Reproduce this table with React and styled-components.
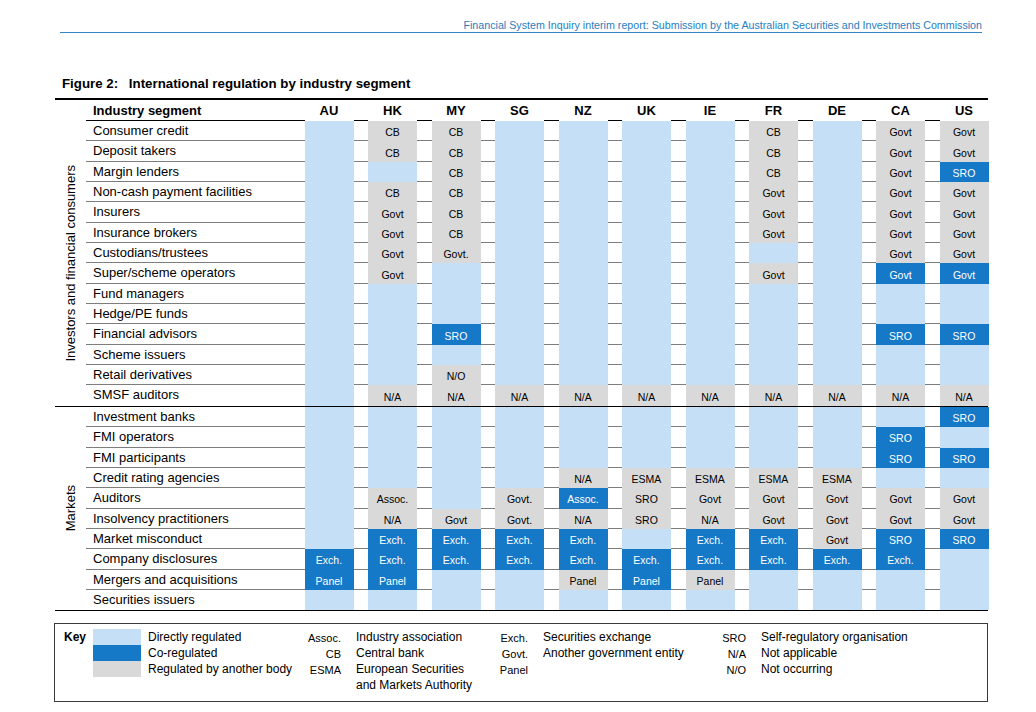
import React from 'react';
import styled, { createGlobalStyle } from 'styled-components';

const GlobalStyle = createGlobalStyle`
  body {
    margin: 0;
    background: #ffffff;
    font-family: "Liberation Sans", Arial, sans-serif;
    color: #000000;
  }
`;

const COLS = ['AU', 'HK', 'MY', 'SG', 'NZ', 'UK', 'IE', 'FR', 'DE', 'CA', 'US'];

const L = '';
const GROUPS = [
  {
    name: 'Investors and financial consumers',
    rows: [
      ['Consumer credit', [L, 'g:CB', 'g:CB', L, L, L, L, 'g:CB', L, 'g:Govt', 'g:Govt']],
      ['Deposit takers', [L, 'g:CB', 'g:CB', L, L, L, L, 'g:CB', L, 'g:Govt', 'g:Govt']],
      ['Margin lenders', [L, L, 'g:CB', L, L, L, L, 'g:CB', L, 'g:Govt', 'd:SRO']],
      ['Non-cash payment facilities', [L, 'g:CB', 'g:CB', L, L, L, L, 'g:Govt', L, 'g:Govt', 'g:Govt']],
      ['Insurers', [L, 'g:Govt', 'g:CB', L, L, L, L, 'g:Govt', L, 'g:Govt', 'g:Govt']],
      ['Insurance brokers', [L, 'g:Govt', 'g:CB', L, L, L, L, 'g:Govt', L, 'g:Govt', 'g:Govt']],
      ['Custodians/trustees', [L, 'g:Govt', 'g:Govt.', L, L, L, L, L, L, 'g:Govt', 'g:Govt']],
      ['Super/scheme operators', [L, 'g:Govt', L, L, L, L, L, 'g:Govt', L, 'd:Govt', 'd:Govt']],
      ['Fund managers', [L, L, L, L, L, L, L, L, L, L, L]],
      ['Hedge/PE funds', [L, L, L, L, L, L, L, L, L, L, L]],
      ['Financial advisors', [L, L, 'd:SRO', L, L, L, L, L, L, 'd:SRO', 'd:SRO']],
      ['Scheme issuers', [L, L, L, L, L, L, L, L, L, L, L]],
      ['Retail derivatives', [L, L, 'g:N/O', L, L, L, L, L, L, L, L]],
      ['SMSF auditors', [L, 'g:N/A', 'g:N/A', 'g:N/A', 'g:N/A', 'g:N/A', 'g:N/A', 'g:N/A', 'g:N/A', 'g:N/A', 'g:N/A']],
    ],
  },
  {
    name: 'Markets',
    rows: [
      ['Investment banks', [L, L, L, L, L, L, L, L, L, L, 'd:SRO']],
      ['FMI operators', [L, L, L, L, L, L, L, L, L, 'd:SRO', L]],
      ['FMI participants', [L, L, L, L, L, L, L, L, L, 'd:SRO', 'd:SRO']],
      ['Credit rating agencies', [L, L, L, L, 'g:N/A', 'g:ESMA', 'g:ESMA', 'g:ESMA', 'g:ESMA', L, L]],
      ['Auditors', [L, 'g:Assoc.', L, 'g:Govt.', 'd:Assoc.', 'g:SRO', 'g:Govt', 'g:Govt', 'g:Govt', 'g:Govt', 'g:Govt']],
      ['Insolvency practitioners', [L, 'g:N/A', 'g:Govt', 'g:Govt.', 'g:N/A', 'g:SRO', 'g:N/A', 'g:Govt', 'g:Govt', 'g:Govt', 'g:Govt']],
      ['Market misconduct', [L, 'd:Exch.', 'd:Exch.', 'd:Exch.', 'd:Exch.', L, 'd:Exch.', 'd:Exch.', 'g:Govt', 'd:SRO', 'd:SRO']],
      ['Company disclosures', ['d:Exch.', 'd:Exch.', 'd:Exch.', 'd:Exch.', 'd:Exch.', 'd:Exch.', 'd:Exch.', 'd:Exch.', 'd:Exch.', 'd:Exch.', L]],
      ['Mergers and acquisitions', ['d:Panel', 'd:Panel', L, L, 'g:Panel', 'd:Panel', 'g:Panel', L, L, L, L]],
      ['Securities issuers', [L, L, L, L, L, L, L, L, L, L, L]],
    ],
  },
];

const KEY_ROWS = [
  ['Key', '#c5e0f6', 'Directly regulated', 'Assoc.', 'Industry association', 'Exch.', 'Securities exchange', 'SRO', 'Self-regulatory organisation'],
  ['', '#1679c7', 'Co-regulated', 'CB', 'Central bank', 'Govt.', 'Another government entity', 'N/A', 'Not applicable'],
  ['', '#d9d9d9', 'Regulated by another body', 'ESMA', 'European Securities', 'Panel', '', 'N/O', 'Not occurring'],
  ['', null, '', '', 'and Markets Authority', '', '', '', ''],
];

const CELL_BG = { l: '#c5e0f6', g: '#d9d9d9', d: '#1679c7' };

const Page = styled.div`
  width: 1036px;
  height: 712px;
  overflow: hidden;
`;

const RunningHead = styled.div`
  margin-left: 60px;
  width: 922px;
  padding-top: 19px;
  border-bottom: 1px solid #3585c4;
  text-align: right;
  font-size: 10.7px;
  line-height: 13px;
  color: #2a7dc0;
`;

const Title = styled.h2`
  margin: 43px 0 0 62px;
  font-size: 13.3px;
  line-height: 16px;
  font-weight: 700;

  span {
    margin-right: 7px;
  }
`;

const Table = styled.div`
  margin: 6px 0 0 55px;
  width: 933px;
  border-top: 2px solid #000000;
  border-bottom: 1px solid #000000;
`;

const Grid = styled.div`
  display: grid;
  grid-template-columns: 204px repeat(11, 49px);
  column-gap: 14.5px;
`;

const HeadRow = styled(Grid)`
  margin-left: 31px;
  height: 20px;
  border-bottom: 1px solid #000000;
  align-items: center;
  font-size: 13px;
  font-weight: 700;
`;

const HeadLabel = styled.div`
  padding-left: 7px;
`;

const HeadCode = styled.div`
  text-align: center;
  background: #ffffff;
  height: 21px;
  line-height: 21px;
  margin-bottom: -1px;
`;

const Group = styled.div`
  display: flex;
  border-top: ${(p) => (p.$first ? 'none' : '1px solid #000000')};
`;

const GroupLabel = styled.div`
  width: 31px;
  flex: none;
  display: flex;
  align-items: center;
  justify-content: center;

  span {
    writing-mode: vertical-rl;
    transform: rotate(180deg);
    font-size: 13px;
    white-space: nowrap;
  }
`;

const Rows = styled.div`
  flex: 1;
`;

const Row = styled(Grid)`
  height: 20.35px;
  box-sizing: border-box;
  border-bottom: ${(p) => (p.$last ? 'none' : '1px solid #7d7d7d')};
`;

const SegLabel = styled.div`
  padding-left: 7px;
  font-size: 13px;
  line-height: 19px;
  white-space: nowrap;
`;

const Cell = styled.div`
  background: ${(p) => CELL_BG[p.$kind]};
  color: ${(p) => (p.$kind === 'd' ? '#ffffff' : '#000000')};
  margin-bottom: ${(p) => (p.$last ? '0' : '-1px')};
  font-size: 10.5px;
  text-align: center;
  display: flex;
  align-items: center;
  justify-content: center;
  padding-top: 2px;
  box-sizing: border-box;
`;

const KeyBox = styled.div`
  margin: 12px 0 0 54px;
  width: 934px;
  height: 79px;
  border: 1px solid #3a3a3a;
  box-sizing: border-box;
  padding: 5px 0 0 9px;
`;

const KeyGrid = styled.div`
  display: grid;
  grid-template-columns: 29px 48px 159px 41px 147px 40px 177px 41px 1fr;
  grid-auto-rows: 16px;
  align-items: center;
`;

const KeyTitle = styled.div`
  font-size: 12px;
  font-weight: 700;
`;

const Swatch = styled.div`
  height: 16px;
  background: ${(p) => p.$color || 'transparent'};
`;

const KeyText = styled.div`
  font-size: 12px;
  padding-left: ${(p) => p.$indent || 0}px;
  white-space: nowrap;
`;

const Abbr = styled.div`
  font-size: 11px;
  text-align: right;
  padding-top: 2px;
  white-space: nowrap;
`;

function parseCell(v) {
  if (!v) return { kind: 'l', text: '' };
  const [kind, text] = v.split(':');
  return { kind, text };
}

function App() {
  return (
    <>
      <GlobalStyle />
      <Page>
        <RunningHead>
          Financial System Inquiry interim report: Submission by the Australian Securities and Investments Commission
        </RunningHead>
        <Title>
          <span>Figure 2:</span> International regulation by industry segment
        </Title>

        <Table>
          <HeadRow>
            <HeadLabel>Industry segment</HeadLabel>
            {COLS.map((c) => (
              <HeadCode key={c}>{c}</HeadCode>
            ))}
          </HeadRow>
          {GROUPS.map((g, gi) => (
            <Group key={g.name} $first={gi === 0}>
              <GroupLabel>
                <span>{g.name}</span>
              </GroupLabel>
              <Rows>
                {g.rows.map(([label, cells], ri) => {
                  const last = ri === g.rows.length - 1;
                  return (
                    <Row key={label} $last={last}>
                      <SegLabel>{label}</SegLabel>
                      {cells.map((v, ci) => {
                        const { kind, text } = parseCell(v);
                        return (
                          <Cell key={ci} $kind={kind} $last={last}>
                            {text}
                          </Cell>
                        );
                      })}
                    </Row>
                  );
                })}
              </Rows>
            </Group>
          ))}
        </Table>

        <KeyBox>
          <KeyGrid>
            {KEY_ROWS.map((r, i) => (
              <React.Fragment key={i}>
                <KeyTitle>{r[0]}</KeyTitle>
                <Swatch $color={r[1]} />
                <KeyText $indent={7}>{r[2]}</KeyText>
                <Abbr>{r[3]}</Abbr>
                <KeyText $indent={15}>{r[4]}</KeyText>
                <Abbr>{r[5]}</Abbr>
                <KeyText $indent={15}>{r[6]}</KeyText>
                <Abbr>{r[7]}</Abbr>
                <KeyText $indent={15}>{r[8]}</KeyText>
              </React.Fragment>
            ))}
          </KeyGrid>
        </KeyBox>
      </Page>
    </>
  );
}

export default App;
